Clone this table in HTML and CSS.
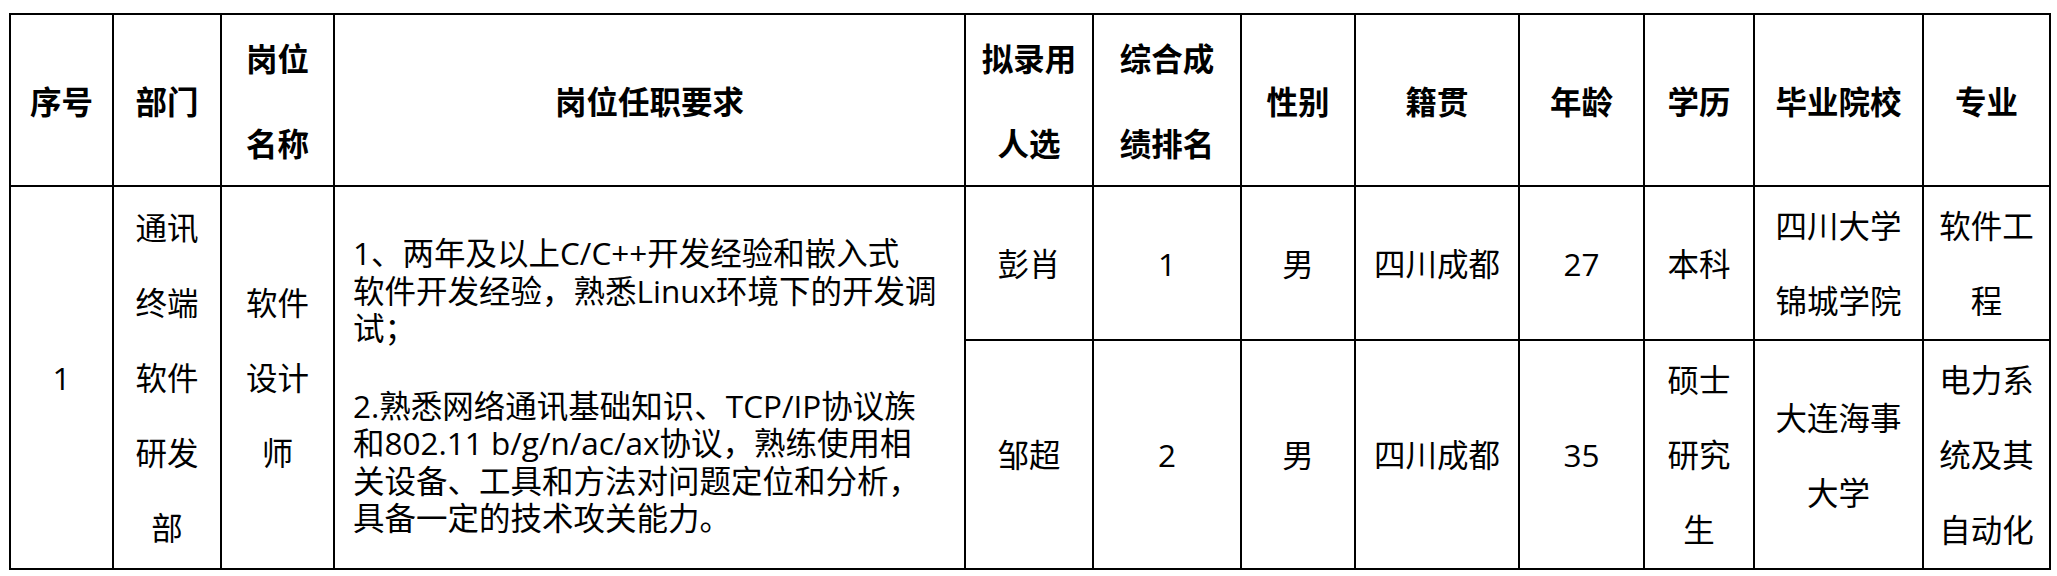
FILE: index.html
```html
<!DOCTYPE html>
<html lang="zh-CN">
<head>
<meta charset="utf-8">
<title>拟录用人员公示</title>
<link rel="stylesheet" href="styles.css">
</head>
<body>
<table class="grid">
  <colgroup>
    <col class="c-seq"><col class="c-dept"><col class="c-title"><col class="c-req">
    <col class="c-name"><col class="c-rank"><col class="c-sex"><col class="c-origin">
    <col class="c-age"><col class="c-edu"><col class="c-school"><col class="c-major">
  </colgroup>
  <thead>
    <tr class="r-head">
      <th>序号</th>
      <th>部门</th>
      <th>岗位<br>名称</th>
      <th>岗位任职要求</th>
      <th>拟录用<br>人选</th>
      <th>综合成<br>绩排名</th>
      <th>性别</th>
      <th>籍贯</th>
      <th>年龄</th>
      <th>学历</th>
      <th>毕业院校</th>
      <th>专业</th>
    </tr>
  </thead>
  <tbody>
    <tr class="r-one">
      <td rowspan="2">1</td>
      <td rowspan="2">通讯<br>终端<br>软件<br>研发<br>部</td>
      <td rowspan="2">软件<br>设计<br>师</td>
      <td rowspan="2" class="req">
        <p class="para">1、两年及以上C/C++开发经验和嵌入式<br>软件开发经验，熟悉Linux环境下的开发调<br>试；</p>
        <p class="para gap">2.熟悉网络通讯基础知识、TCP/IP协议族<br>和802.11 b/g/n/ac/ax协议，熟练使用相<br>关设备、工具和方法对问题定位和分析，<br>具备一定的技术攻关能力。</p>
      </td>
      <td>彭肖</td>
      <td>1</td>
      <td>男</td>
      <td>四川成都</td>
      <td>27</td>
      <td>本科</td>
      <td>四川大学<br>锦城学院</td>
      <td>软件工<br>程</td>
    </tr>
    <tr class="r-two">
      <td>邹超</td>
      <td>2</td>
      <td>男</td>
      <td>四川成都</td>
      <td>35</td>
      <td>硕士<br>研究<br>生</td>
      <td>大连海事<br>大学</td>
      <td>电力系<br>统及其<br>自动化</td>
    </tr>
  </tbody>
</table>
</body>
</html>
```

FILE: styles.css
```css
html, body {
  margin: 0;
  padding: 0;
  background: #ffffff;
}

body {
  padding: 13px 0 0 9px;
  font-family: "Open Sans", "Noto Sans CJK SC", sans-serif;
  color: #000000;
}

.grid {
  border-collapse: collapse;
  table-layout: fixed;
  width: 2042px;
  font-size: 31.5px;
}

.c-seq { width: 103px; }
.c-dept { width: 108px; }
.c-title { width: 113px; }
.c-req { width: 631px; }
.c-name { width: 128px; }
.c-rank { width: 148px; }
.c-sex { width: 114px; }
.c-origin { width: 164px; }
.c-age { width: 125px; }
.c-edu { width: 110px; }
.c-school { width: 169px; }
.c-major { width: 127px; }

.grid th,
.grid td {
  border: 2px solid #000000;
  padding: 0;
  text-align: center;
  vertical-align: middle;
  white-space: nowrap;
}

.grid th {
  font-family: "Noto Sans CJK SC", sans-serif;
  font-weight: 700;
  line-height: 85px;
}

.grid td {
  line-height: 75px;
}

.r-head { height: 169px; }
.r-one { height: 154px; }
.r-two { height: 229px; }

.grid td.req {
  text-align: left;
  padding: 16px 0 0 18px;
  line-height: 37.5px;
}

.para {
  margin: 0;
}

.para.gap {
  margin-top: 40px;
}
```
